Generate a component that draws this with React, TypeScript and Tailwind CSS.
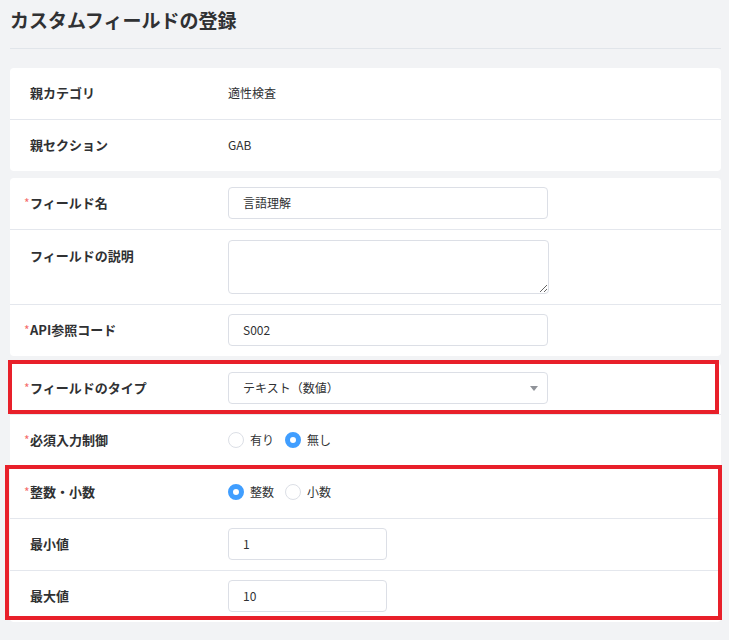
import React from 'react';

const Label = ({ text, required }: { text: string; required?: boolean }) => (
  <div className="w-[218px] shrink-0 pl-[20px] text-[13px] font-bold leading-[32px] text-[#303133]">
    <span className="relative">
      {required && (
        <span className="absolute -left-[6px] top-[4px] text-[12px] font-normal leading-none text-[#f56c6c]">*</span>
      )}
      {text}
    </span>
  </div>
);

const Row = ({ children, first }: { children: React.ReactNode; first?: boolean }) => (
  <div className={`flex items-start pt-[9px] pb-[10px] ${first ? '' : 'border-t border-[#e4e7ed]'}`}>{children}</div>
);

const TextInput = ({ value, width }: { value: string; width: string }) => (
  <div className={`${width} flex h-[32px] items-center rounded-[4px] border border-[#dcdfe6] bg-white px-[14px] text-[12px] text-[#303133]`}>
    {value}
  </div>
);

const Radio = ({ checked, label }: { checked?: boolean; label: string }) => (
  <label className="mr-[11px] flex items-center gap-[6px]">
    <span
      className={
        checked
          ? 'h-[16px] w-[16px] rounded-full border-[5px] border-[#409eff] bg-white'
          : 'h-[16px] w-[16px] rounded-full border border-[#dcdfe6] bg-white'
      }
    />
    <span className="text-[12px] text-[#303133]">{label}</span>
  </label>
);

const App = () => {
  return (
    <div className="min-h-screen bg-[#f2f3f5] pl-[10px] pr-[8px] font-['Noto_Sans_CJK_JP','Noto_Sans',sans-serif]">
      <div className="h-[49px] border-b border-[#e1e5ea] pt-[6px]">
        <h1 className="text-[19px] font-bold leading-[28px] text-[#303133]">カスタムフィールドの登録</h1>
      </div>

      {/* parent info */}
      <div className="mt-[19px] rounded-[4px] bg-white">
        <Row first>
          <Label text="親カテゴリ" />
          <div className="text-[12px] leading-[32px] text-[#303133]">適性検査</div>
        </Row>
        <Row>
          <Label text="親セクション" />
          <div className="text-[12px] leading-[32px] text-[#303133]">GAB</div>
        </Row>
      </div>

      {/* basic fields */}
      <div className="mt-[7px] rounded-[4px] bg-white">
        <Row first>
          <Label text="フィールド名" required />
          <TextInput value="言語理解" width="w-[320px]" />
        </Row>
        <div className="flex items-start border-t border-[#e4e7ed] py-[10px]">
          <Label text="フィールドの説明" />
          <textarea className="h-[54px] w-[321px] rounded-[4px] border border-[#dcdfe6] bg-white outline-none" />
        </div>
        <Row>
          <Label text="API参照コード" required />
          <TextInput value="S002" width="w-[320px]" />
        </Row>
      </div>

      {/* type settings */}
      <div className="mt-[7px] rounded-[4px] bg-white">
        <div className="relative">
          <Row first>
            <Label text="フィールドのタイプ" required />
            <div className="flex h-[32px] w-[320px] items-center justify-between rounded-[4px] border border-[#dcdfe6] bg-white pl-[14px] pr-[9px] text-[12px] text-[#303133]">
              <span>テキスト（数値）</span>
              <svg width="8" height="5" viewBox="0 0 8 5">
                <path d="M0 0 L8 0 L4 5 Z" fill="#909399" />
              </svg>
            </div>
          </Row>
          <div className="pointer-events-none absolute -left-[2px] right-[2px] -top-[3px] bottom-0 border-[4px] border-[#e8202a]" />
        </div>
        <Row>
          <Label text="必須入力制御" required />
          <div className="flex h-[32px] items-center">
            <Radio label="有り" />
            <Radio checked label="無し" />
          </div>
        </Row>
        <div className="relative">
          <Row>
            <Label text="整数・小数" required />
            <div className="flex h-[32px] items-center">
              <Radio checked label="整数" />
              <Radio label="小数" />
            </div>
          </Row>
          <Row>
            <Label text="最小値" />
            <TextInput value="1" width="w-[159px]" />
          </Row>
          <Row>
            <Label text="最大値" />
            <TextInput value="10" width="w-[159px]" />
          </Row>
          <div className="pointer-events-none absolute -left-[5px] -right-[1px] -top-[1px] bottom-[2px] border-[4px] border-[#e8202a]" />
        </div>
      </div>
    </div>
  );
};

export default App;
